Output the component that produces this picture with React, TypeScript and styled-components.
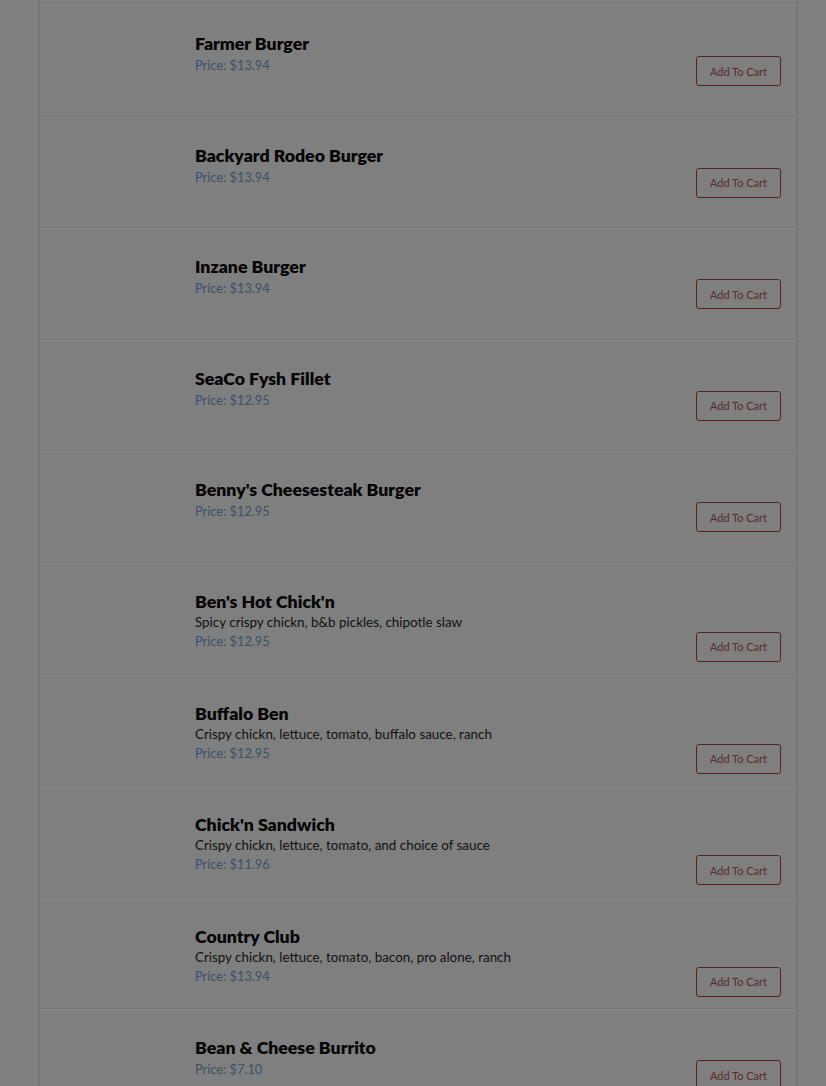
import { FC } from "react"
import styled, { createGlobalStyle } from "styled-components"

const GlobalStyle = createGlobalStyle`
  html, body {
    margin: 0;
    padding: 0;
    background-color: #7f7f7f;
    font-family: "Lato", "Liberation Sans", sans-serif;
    overflow: hidden;
  }
`

const Page = styled.div`
  padding-left: 38px;
  width: 760px;
`

const Card = styled.div`
  border-left: 2px solid #767676;
  border-right: 2px solid #767676;
  padding-top: 5px;
  background-color: #7f7f7f;
`

const Row = styled.div`
  box-sizing: border-box;
  height: 111.6px;
  display: flex;
  border-top: 1px solid #878787;
  border-bottom: 1px solid #757575;
  padding: 27px 15px 0 0;
`

const Thumb = styled.div`
  width: 155px;
  flex-shrink: 0;
`

const Info = styled.div`
  flex: 1;
  display: flex;
  align-items: flex-end;
  justify-content: space-between;
  align-self: flex-start;
`

const Texts = styled.div`
  display: flex;
  flex-direction: column;
  padding-bottom: 10px;
`

const Title = styled.div`
  font-size: 17.7px;
  line-height: 22px;
  font-weight: 800;
  color: #050505;
`

const Desc = styled.div`
  font-size: 13.4px;
  line-height: 18px;
  color: #111111;
`

const Price = styled.div`
  font-size: 12.8px;
  line-height: 21px;
  color: #3e5068;
`

const CartButton = styled.button`
  box-sizing: border-box;
  width: 85px;
  height: 30px;
  border: 1px solid #562222;
  border-radius: 3px;
  background: transparent;
  color: #5a2a2a;
  font-family: "Lato", "Liberation Sans", sans-serif;
  font-size: 11px;
  padding: 0;
`

type Item = {
  name: string
  desc?: string
  price: string
}

const items: Item[] = [
  { name: "Farmer Burger", price: "$13.94" },
  { name: "Backyard Rodeo Burger", price: "$13.94" },
  { name: "Inzane Burger", price: "$13.94" },
  { name: "SeaCo Fysh Fillet", price: "$12.95" },
  { name: "Benny's Cheesesteak Burger", price: "$12.95" },
  { name: "Ben's Hot Chick'n", desc: "Spicy crispy chickn, b&b pickles, chipotle slaw", price: "$12.95" },
  { name: "Buffalo Ben", desc: "Crispy chickn, lettuce, tomato, buffalo sauce, ranch", price: "$12.95" },
  { name: "Chick'n Sandwich", desc: "Crispy chickn, lettuce, tomato, and choice of sauce", price: "$11.96" },
  { name: "Country Club", desc: "Crispy chickn, lettuce, tomato, bacon, pro alone, ranch", price: "$13.94" },
  { name: "Bean & Cheese Burrito", price: "$7.10" },
]

const MenuRow: FC<{ item: Item }> = ({ item }) => (
  <Row>
    <Thumb />
    <Info>
      <Texts>
        <Title>{item.name}</Title>
        {item.desc && <Desc>{item.desc}</Desc>}
        <Price>Price: {item.price}</Price>
      </Texts>
      <CartButton type="button">Add To Cart</CartButton>
    </Info>
  </Row>
)

const App: FC = () => (
  <>
    <GlobalStyle />
    <Page>
      <Card>
        {items.map(item => <MenuRow key={item.name} item={item} />)}
      </Card>
    </Page>
  </>
)

export default App
